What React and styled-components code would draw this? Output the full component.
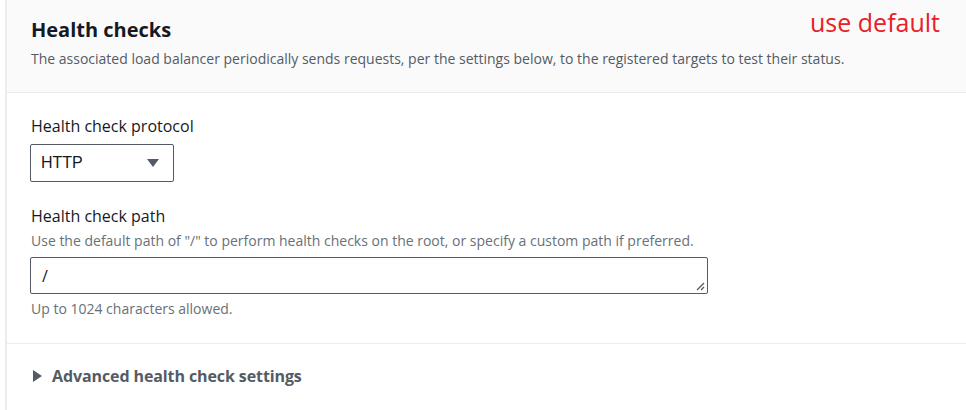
import React from 'react';
import styled, { createGlobalStyle } from 'styled-components';

const GlobalStyle = createGlobalStyle`
    html, body {
        margin : 0;
        padding : 0;
        background : #ffffff;
    }
    body {
        font-family : "Open Sans", "Noto Sans", sans-serif;
        color : #16191f;
    }
`;

const Panel = styled.div`
    width : 966px;
    height : 410px;
    margin-left : 5px;
    border-left : 2px solid #eaeded;
    box-sizing : border-box;
    overflow : hidden;
`;

const Header = styled.div`
    position : relative;
    background : #fafafa;
    border-bottom : 1px solid #eaeded;
    padding : 16px 24px 21px 24px;
    height : 93px;
    box-sizing : border-box;
`;

const Title = styled.h2`
    margin : 0;
    font-size : 20px;
    font-weight : 700;
    line-height : 28px;
    color : #16191f;
`;

const Description = styled.p`
    margin : 5px 0 0 0;
    font-size : 14px;
    line-height : 20px;
    color : #545b64;
`;

const Note = styled.span`
    position : absolute;
    top : 5px;
    right : 31px;
    font-size : 25px;
    color : #e8202a;
`;

const Body = styled.div`
    padding : 21px 24px 0 24px;
    display : flex;
    flex-direction : column;
    gap : 22px;
`;

const Field = styled.div`
    display : flex;
    flex-direction : column;
`;

const Label = styled.label`
    font-size : 16px;
    line-height : 24px;
    color : #16191f;
`;

const Hint = styled.div`
    font-size : 14px;
    line-height : 20px;
    color : #687078;
    margin-top : ${(p) => p.$top || 0}px;
`;

const Select = styled.div`
    margin-top : 6px;
    margin-left : -1px;
    width : 144px;
    height : 38px;
    box-sizing : border-box;
    border : 1px solid #545b64;
    border-radius : 2px;
    display : flex;
    align-items : center;
    justify-content : space-between;
    padding : 0 14px 0 10px;
    font-family : "Liberation Sans", Arial, sans-serif;
    font-size : 16px;
    color : #16191f;
`;

const TextArea = styled.div`
    position : relative;
    margin-top : 6px;
    margin-left : -1px;
    width : 678px;
    height : 37px;
    box-sizing : border-box;
    border : 1px solid #545b64;
    border-radius : 2px;
    padding : 0 11px;
    display : flex;
    align-items : center;
    font-size : 16px;
    color : #16191f;
`;

const Grip = styled.svg`
    position : absolute;
    right : 2px;
    bottom : 2px;
`;

const Divider = styled.div`
    height : 1px;
    background : #eaeded;
    margin-top : 24px;
`;

const Expander = styled.div`
    display : flex;
    align-items : center;
    gap : 10px;
    padding : 21px 26px;
    font-size : 16px;
    font-weight : 700;
    letter-spacing : -0.1px;
    color : #545b64;
`;

export default function App() {
    return (
        <>
            <GlobalStyle />
            <Panel>
                <Header>
                    <Title>Health checks</Title>
                    <Description>
                        The associated load balancer periodically sends requests, per the settings below, to the registered targets to test their status.
                    </Description>
                    <Note>use default</Note>
                </Header>
                <Body>
                    <Field>
                        <Label>Health check protocol</Label>
                        <Select>
                            <span>HTTP</span>
                            <svg width="12" height="10" viewBox="0 0 12 10">
                                <polygon points="0,1 12,1 6,9" fill="#545b64" />
                            </svg>
                        </Select>
                    </Field>
                    <Field>
                        <Label>Health check path</Label>
                        <Hint $top={3}>Use the default path of "/" to perform health checks on the root, or specify a custom path if preferred.</Hint>
                        <TextArea>
                            /
                            <Grip width="10" height="10" viewBox="0 0 10 10">
                                <line x1="9" y1="2" x2="2" y2="9" stroke="#545b64" strokeWidth="1.2" />
                                <line x1="9" y1="6" x2="6" y2="9" stroke="#545b64" strokeWidth="1.2" />
                            </Grip>
                        </TextArea>
                        <Hint $top={5}>Up to 1024 characters allowed.</Hint>
                    </Field>
                </Body>
                <Divider />
                <Expander>
                    <svg width="9" height="12" viewBox="0 0 9 12">
                        <polygon points="0,0 9,6 0,12" fill="#545b64" />
                    </svg>
                    <span>Advanced health check settings</span>
                </Expander>
            </Panel>
        </>
    );
}
